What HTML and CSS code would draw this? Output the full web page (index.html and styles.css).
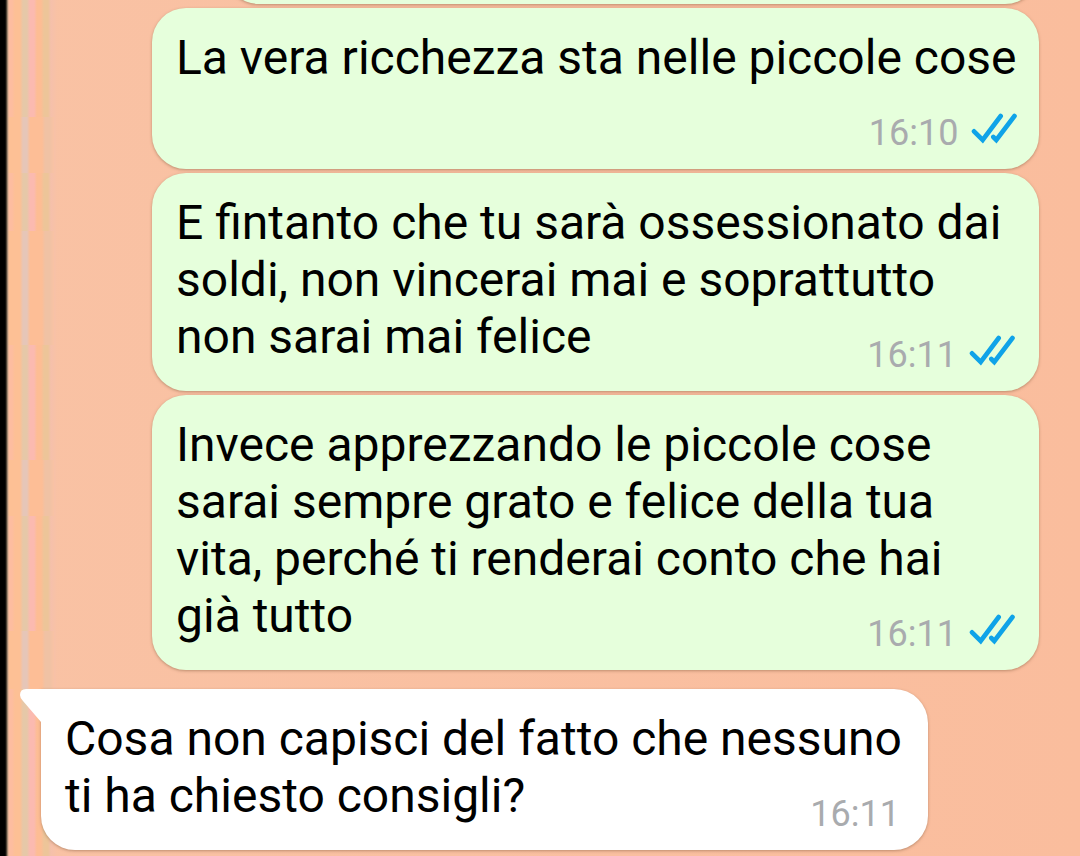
FILE: index.html
```html
<!DOCTYPE html>
<html lang="it">
<head>
<meta charset="utf-8">
<meta name="viewport" content="width=device-width, initial-scale=1">
<title>Chat</title>
<link rel="stylesheet" href="styles.css">
</head>
<body>
<svg class="defs" aria-hidden="true">
  <symbol id="read" viewBox="0 0 46 32">
    <path d="M3 18.300 L11.700 27 L29.700 3 M22.300 24 L25.300 27 L43.500 3" fill="none" stroke="#0fa3e8" stroke-width="4.600" stroke-linecap="round" stroke-linejoin="miter"/>
  </symbol>
</svg>
<main class="chat">
  <div class="bubble sent previous"></div>
  <article class="bubble sent short">
    <p class="text">La vera ricchezza sta nelle piccole cose</p>
    <footer class="meta"><time>16:10</time><svg class="ticks" role="img" aria-label="Letto"><use href="#read"/></svg></footer>
  </article>
  <article class="bubble sent">
    <p class="text">E fintanto che tu sarà ossessionato dai<br>soldi, non vincerai mai e soprattutto<br>non sarai mai felice</p>
    <footer class="meta"><time>16:11</time><svg class="ticks" role="img" aria-label="Letto"><use href="#read"/></svg></footer>
  </article>
  <article class="bubble sent">
    <p class="text">Invece apprezzando le piccole cose<br>sarai sempre grato e felice della tua<br>vita, perché ti renderai conto che hai<br>già tutto</p>
    <footer class="meta"><time>16:11</time><svg class="ticks" role="img" aria-label="Letto"><use href="#read"/></svg></footer>
  </article>
  <article class="bubble received">
    <svg class="tail" viewBox="0 0 42 36" aria-hidden="true"><path d="M42 0 H6 Q0 0 0 6 Q0 9 3 12 L21 33 V36 H42 Z" fill="#fff"/></svg>
    <p class="text">Cosa non capisci del fatto che nessuno<br>ti ha chiesto consigli?</p>
    <footer class="meta"><time>16:11</time></footer>
  </article>
</main>
</body>
</html>
```
FILE: styles.css
```css
* {
  box-sizing: border-box;
}

body {
  --warm: linear-gradient(90deg, #fdc095 20px, #e6c6b8 23px, #e6c6b8 27px, #fdbe96 30px, #fdbe96 42px, #f0c2a4 45px, #f0c2a4 50px, #f9c2a4 54px);
  margin: 0;
  min-height: 100vh;
  overflow: hidden;
  font-family: Roboto, "Liberation Sans", sans-serif;
  color: #000;
  background:
    linear-gradient(90deg, #000 5px, #242018 6px, #c9a58a 8px, transparent 9px),
    var(--warm) 0 117px / 54px 56px no-repeat,
    var(--warm) 0 231px / 54px 114px no-repeat,
    var(--warm) 0 460px / 54px 56px no-repeat,
    var(--warm) 0 631px / 54px 58px no-repeat,
    linear-gradient(90deg, #fdbda0 12px, #fdc095 15px, #fdc095 20px, #e6c8a8 23px, #e6c8a8 27px, #fbbab0 30px, #fbbab0 34px, #fdbd94 37px, #fdbd94 41px, #edc599 44px, #edc599 48px, #f5c0ab 51px, #f9c2a4 57px, transparent 60px),
    linear-gradient(90deg, #f9c2a4, #fabd9d);
}

.defs {
  display: none;
}

.chat {
  display: flex;
  flex-direction: column;
  gap: 4px;
  padding: 0 41px;
}

.bubble {
  position: relative;
  display: grid;
  width: 100%;
  max-width: 887px;
  padding: 21px 24px 18px;
  border-radius: 34px;
  box-shadow: 0 1px 3px rgba(130, 90, 60, 0.5);
}

.sent {
  align-self: flex-end;
  background: #e6ffdc;
}

.received {
  margin-top: 15px;
  background: #fff;
  border-top-left-radius: 0;
}

.previous {
  max-width: 814px;
  height: 72px;
  margin-top: -68px;
}

.short {
  min-height: 161px;
}

.text,
.meta {
  grid-area: 1 / 1;
}

.text {
  margin: 0 0 8px;
  font-size: 48px;
  line-height: 57px;
  white-space: nowrap;
}

.meta {
  display: flex;
  align-items: center;
  gap: 12px;
  place-self: end;
  height: 36px;
  font-size: 36px;
  line-height: 36px;
  color: #a9abae;
}

.received .meta {
  padding-right: 4px;
}

.ticks {
  width: 46px;
  height: 32px;
  margin-bottom: 8px;
}

.tail {
  position: absolute;
  top: 0;
  left: -21px;
  width: 42px;
  height: 36px;
}
```
